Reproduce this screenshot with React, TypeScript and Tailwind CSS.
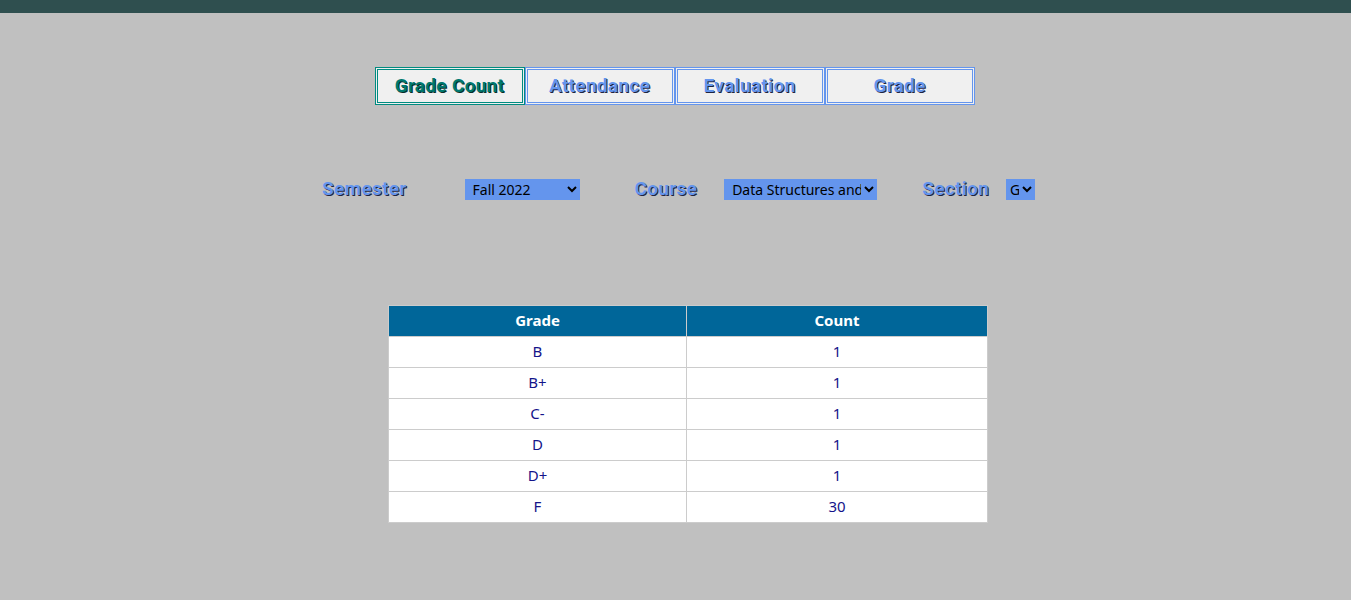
import React from "react";

const tabs = ["Grade Count", "Attendance", "Evaluation", "Grade"];

const rows = [
  { grade: "B", count: 1 },
  { grade: "B+", count: 1 },
  { grade: "C-", count: 1 },
  { grade: "D", count: 1 },
  { grade: "D+", count: 1 },
  { grade: "F", count: 30 },
];

const App = () => {
  return (
    <div className="min-h-[600px] w-full bg-[#c0c0c0] font-['Noto_Sans',sans-serif]">
      <div className="h-[13px] w-full bg-[#2f4f4f]" />

      <div className="flex justify-center pt-[54px] pr-[2px]">
        {tabs.map((tab, i) => (
          <button
            key={tab}
            className={
              i === 0
                ? "w-[150px] h-[38px] border-[3px] border-double border-[#008b80] bg-[#f0f0f0] text-[19px] tracking-[0.3px] font-bold text-[#00786f] [text-shadow:1px_1px_0_#0b2e2a] font-['Roboto',sans-serif]"
                : "w-[150px] h-[38px] border-[3px] border-double border-[#6495ed] bg-[#f0f0f0] text-[19px] tracking-[0.3px] font-bold text-[#6495ed] [text-shadow:1px_1px_0_#1f2440] font-['Roboto',sans-serif]"
            }
          >
            {tab}
          </button>
        ))}
      </div>

      <div className="flex items-center justify-center pt-[70px] pl-[6px]">
        <label className="text-[19px] tracking-[0.3px] font-bold text-[#6495ed] [text-shadow:1px_1px_0_#1f2440] font-['Roboto',sans-serif]">
          Semester
        </label>
        <select className="ml-[58px] w-[115px] h-[21px] bg-[#6495ed] text-[14px] text-black pl-1">
          <option>Fall 2022</option>
        </select>
        <label className="ml-[55px] text-[19px] tracking-[0.3px] font-bold text-[#6495ed] [text-shadow:1px_1px_0_#1f2440] font-['Roboto',sans-serif]">
          Course
        </label>
        <select className="ml-[27px] w-[153px] h-[21px] bg-[#6495ed] text-[14px] text-black pl-1">
          <option>Data Structures and Algorithms</option>
        </select>
        <label className="ml-[45px] text-[19px] tracking-[0.3px] font-bold text-[#6495ed] [text-shadow:1px_1px_0_#1f2440] font-['Roboto',sans-serif]">
          Section
        </label>
        <select className="ml-[17px] w-[29px] h-[21px] bg-[#6495ed] text-[14px] text-black pl-0">
          <option>G</option>
        </select>
      </div>

      <div className="flex justify-center pt-[101px]">
        <table className="w-[600px] border-collapse bg-white text-[15px] ml-[25px]">
          <thead>
            <tr className="bg-[#006699] text-white h-[31px]">
              <th className="w-[298px] border border-[#cccccc] font-bold">Grade</th>
              <th className="border border-[#cccccc] font-bold">Count</th>
            </tr>
          </thead>
          <tbody>
            {rows.map((r) => (
              <tr key={r.grade} className="h-[31px] text-[#14148a]">
                <td className="border border-[#cccccc] text-center">{r.grade}</td>
                <td className="border border-[#cccccc] text-center">{r.count}</td>
              </tr>
            ))}
          </tbody>
        </table>
      </div>
    </div>
  );
};

export default App;
